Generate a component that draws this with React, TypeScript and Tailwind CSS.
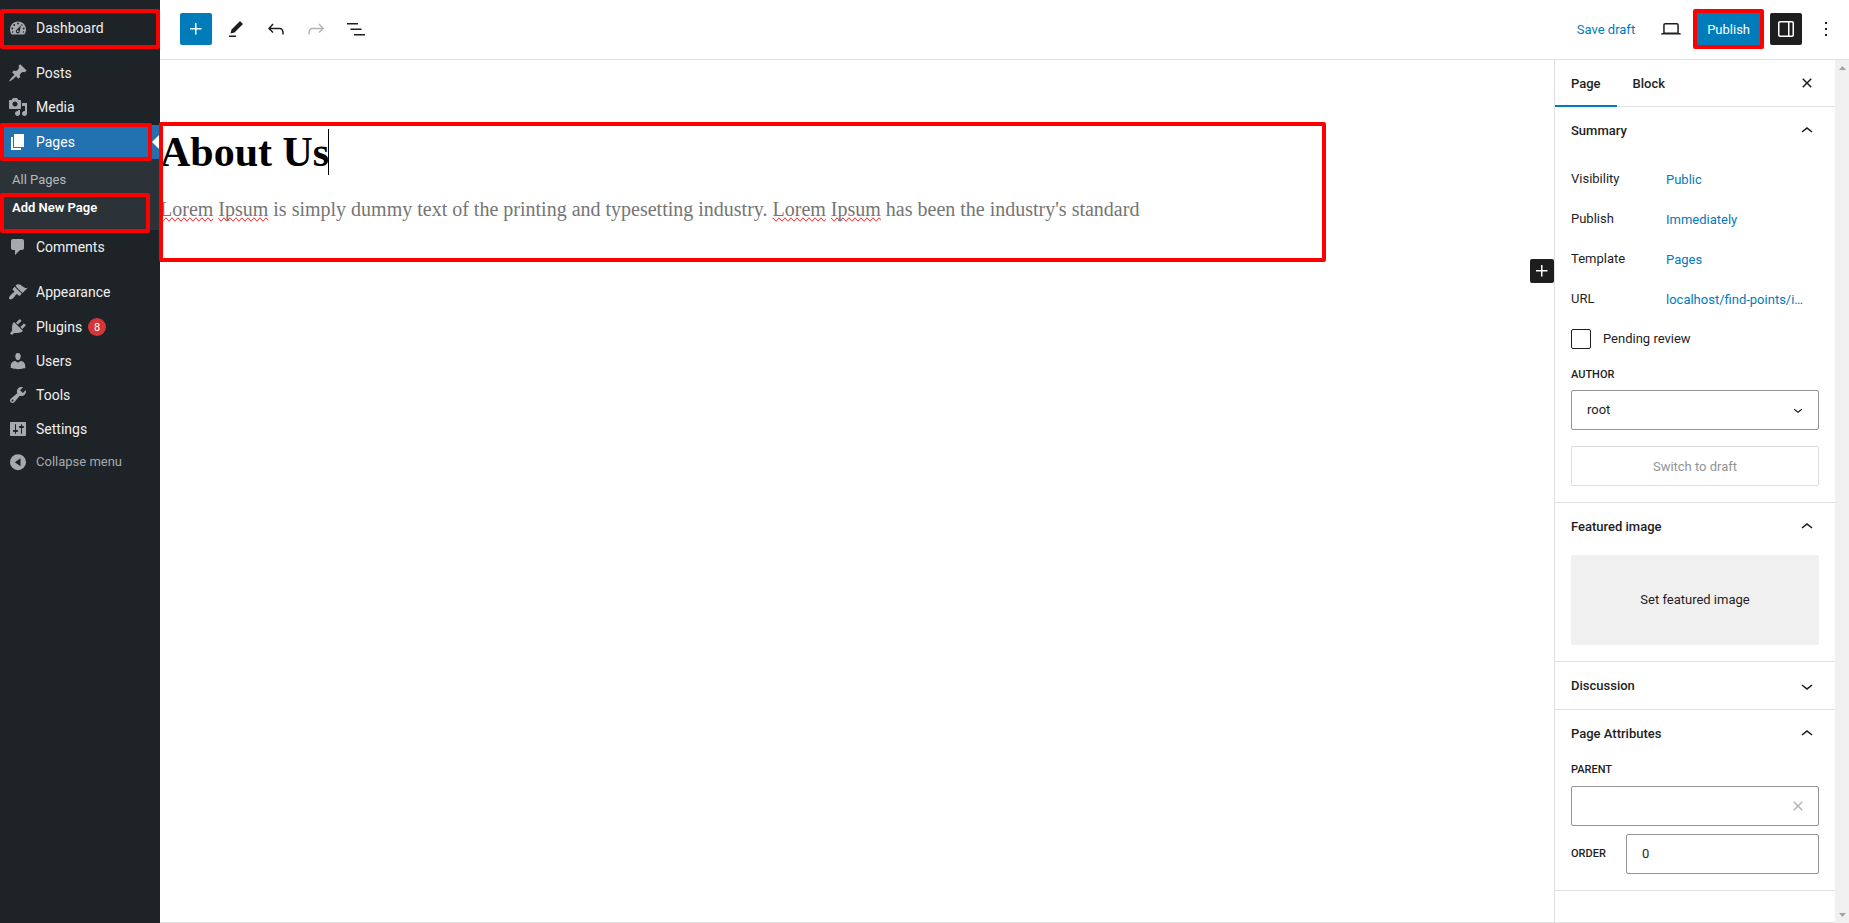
import React from 'react';

const icons = {
  post: 'M10.44 3.02l1.82-1.82 6.36 6.35-1.83 1.82c-1.05-.68-2.48-.57-3.41.36l-.75.75c-.92.93-1.04 2.35-.35 3.41l-1.83 1.82-2.41-2.41-2.8 2.79c-.42.42-3.38 2.71-3.8 2.29s1.86-3.39 2.28-3.81l2.79-2.79L4.1 9.36l1.83-1.82c1.05.69 2.48.57 3.4-.36l.75-.75c.93-.92 1.05-2.35.36-3.41z',
  media:
    'M13 11V4c0-.55-.45-1-1-1h-1.67L9 1H5L3.67 3H2c-.55 0-1 .45-1 1v7c0 .55.45 1 1 1h10c.55 0 1-.45 1-1zM7 4.5c1.38 0 2.5 1.12 2.5 2.5S8.38 9.5 7 9.5 4.5 8.38 4.5 7 5.62 4.5 7 4.5zM14 6h5v10.5c0 1.38-1.12 2.5-2.5 2.5S14 17.88 14 16.5s1.12-2.5 2.5-2.5c.17 0 .34.02.5.05V9h-3V6zm-4 8.05V13h2v3.5c0 1.38-1.12 2.5-2.5 2.5S7 17.88 7 16.5 8.12 14 9.5 14c.17 0 .34.02.5.05z',
  page: 'M6 15V2h10v13H6zm-1 1h8v2H3V5h2v11z',
  comments:
    'M5 2h9c1.1 0 2 .9 2 2v7c0 1.1-.9 2-2 2h-2l-5 5v-5H5c-1.1 0-2-.9-2-2V4c0-1.1.9-2 2-2z',
  appearance:
    'M14.48 11.06L7.41 3.99l1.5-1.5c.5-.56 2.3-.47 3.51.32 1.21.8 1.43 1.28 2.91 2.1 1.18.64 2.45 1.26 4.45.85zm-.71.71L6.7 4.7 4.93 6.47c-.39.39-.39 1.02 0 1.41l1.06 1.06c.39.39.39 1.03 0 1.42-.6.6-1.43 1.11-2.21 1.69-.35.26-.7.53-1.01.84C1.43 14.23.4 16.08 1.4 17.07c.99 1 2.84-.03 4.18-1.36.31-.31.58-.66.85-1.02.57-.78 1.08-1.61 1.69-2.21.39-.39 1.02-.39 1.41 0l1.06 1.06c.39.39 1.02.39 1.41 0z',
  plugins:
    'M13.11 4.36L9.87 7.6 8 5.73l3.24-3.24c.35-.34 1.05-.2 1.56.32.52.51.66 1.21.31 1.55zm-8 1.77l.91-1.12 9.01 9.01-1.19.84c-.71.71-2.63 1.16-3.82 1.16H6.14L4.9 17.26c-.59.59-1.54.59-2.12 0-.59-.58-.59-1.53 0-2.12l1.24-1.24v-3.88c0-1.13.4-3.19 1.09-3.89zm7.26 3.97l3.24-3.24c.34-.35 1.04-.21 1.55.31.52.51.66 1.21.31 1.55l-3.24 3.25z',
  users:
    'M10 9.25c-2.27 0-2.73-3.44-2.73-3.44C7 4.02 7.82 2 9.97 2c2.16 0 2.98 2.02 2.71 3.81 0 0-.41 3.44-2.68 3.44zm0 2.57L12.72 10c2.39 0 4.52 2.33 4.52 4.53v2.49s-3.65 1.13-7.24 1.13c-3.65 0-7.24-1.13-7.24-1.13v-2.49c0-2.25 1.94-4.48 4.47-4.48z',
  tools:
    'M16.68 9.77c-1.34 1.34-3.3 1.67-4.95.99l-5.41 6.52c-.99.99-2.59.99-3.58 0s-.99-2.59 0-3.57l6.52-5.42c-.68-1.65-.35-3.61.99-4.95 1.28-1.28 3.12-1.62 4.72-1.06l-2.89 2.89 2.82 2.82 2.86-2.87c.53 1.58.18 3.39-1.08 4.65zM3.81 16.21c.4.39 1.04.39 1.43 0 .4-.4.4-1.04 0-1.43-.39-.4-1.03-.4-1.43 0-.39.39-.39 1.03 0 1.43z',
  settings:
    'M18 16V4c0-.55-.45-1-1-1H3c-.55 0-1 .45-1 1v12c0 .55.45 1 1 1h14c.55 0 1-.45 1-1zM8 11h1c.55 0 1 .45 1 1s-.45 1-1 1H8v1.5c0 .28-.22.5-.5.5s-.5-.22-.5-.5V13H6c-.55 0-1-.45-1-1s.45-1 1-1h1V5.5c0-.28.22-.5.5-.5s.5.22.5.5V11zm5-2h-1c-.55 0-1-.45-1-1s.45-1 1-1h1V5.5c0-.28.22-.5.5-.5s.5.22.5.5V7h1c.55 0 1 .45 1 1s-.45 1-1 1h-1v5.5c0 .28-.22.5-.5.5s-.5-.22-.5-.5V9z',
  plus: 'M11 12.5V17.5H12.5V12.5H17.5V11H12.5V6H11V11H6V12.5H11Z',
  edit: 'm19 7-3-3-8.5 8.5-1 4 4-1L19 7Zm-7 11.5H5V20h7v-1.5Z',
  undo: 'M18.3 11.7c-.6-.6-1.4-.9-2.3-.9H6.7l2.9-3.3-1.1-1-4.5 5L8.5 16l1-1-2.7-2.7H16c.5 0 .9.2 1.3.5 1 1 1 3.4 1 4.5v.3h1.5v-.2c0-1.5 0-4.3-1.5-5.7z',
  redo: 'M15.6 6.5l-1.1 1 2.9 3.3H8c-.9 0-1.7.3-2.3.9-1.4 1.5-1.4 4.2-1.4 5.6v.2h1.5v-.3c0-1.1 0-3.5 1-4.5.3-.3.7-.5 1.3-.5h9.2L14.5 15l1.1 1.1 4.6-4.6-4.6-5z',
  list: 'M3 6h11v1.5H3V6Zm3.5 5.5h11V13h-11v-1.5ZM21 17H10v1.5h11V17Z',
  desktop:
    'M20.5 16h-.7V8c0-1.1-.9-2-2-2H6.2c-1.1 0-2 .9-2 2v8h-.7c-.8 0-1.5.7-1.5 1.5h20c0-.8-.7-1.5-1.5-1.5zM5.7 8c0-.3.2-.5.5-.5h11.6c.3 0 .5.2.5.5v7.6H5.7V8z',
  drawer:
    'M18 4H6c-1.1 0-2 .9-2 2v12c0 1.1.9 2 2 2h12c1.1 0 2-.9 2-2V6c0-1.1-.9-2-2-2zm-4 14.5H6c-.3 0-.5-.2-.5-.5V6c0-.3.2-.5.5-.5h8v13zm4.5-.5c0 .3-.2.5-.5.5h-2.5v-13H18c.3 0 .5.2.5.5v12z',
  more: 'M13 19h-2v-2h2v2zm0-6h-2v-2h2v2zm0-6h-2V5h2v2z',
  close:
    'M12 13.06l3.712 3.713 1.061-1.06L13.061 12l3.712-3.712-1.06-1.06L12 10.938 8.288 7.227l-1.061 1.06L10.939 12l-3.712 3.712 1.06 1.061L12 13.061z',
  up: 'M6.5 12.4L12 8l5.5 4.4-.9 1.2L12 10l-4.5 3.6-1-1.2z',
  down: 'M17.5 11.6L12 16l-5.5-4.4.9-1.2L12 14l4.5-3.6 1 1.2z',
};

type IconName = keyof typeof icons;

function MenuIcon({ name }: { name: IconName }) {
  return (
    <svg viewBox="0 0 20 20" className="size-5 shrink-0" fill="currentColor" fillRule="evenodd" aria-hidden="true">
      <path d={icons[name]} />
    </svg>
  );
}

function Icon({ name, className = 'size-6' }: { name: IconName; className?: string }) {
  return (
    <svg viewBox="0 0 24 24" className={className} fill="currentColor" aria-hidden="true">
      <path d={icons[name]} />
    </svg>
  );
}

function DashboardIcon() {
  return (
    <svg viewBox="0 0 20 20" className="size-5 shrink-0" aria-hidden="true">
      <path fill="currentColor" d="M3.76 16.5h12.48c1.11-1.37 1.76-3.11 1.76-5 0-4.42-3.58-8-8-8s-8 3.58-8 8c0 1.89.65 3.63 1.76 5z" />
      <g fill="#1d2327">
        <circle cx="10" cy="5.5" r=".9" />
        <circle cx="6.2" cy="7" r=".9" />
        <circle cx="13.9" cy="7" r=".7" />
        <circle cx="4.3" cy="10.5" r=".9" />
        <circle cx="4.6" cy="14" r=".8" />
        <circle cx="15.7" cy="10.5" r=".9" />
        <circle cx="15.400" cy="14" r=".8" />
        <path d="M12.900 7.300 11.800 13.600a2 2 0 1 1-2.900-2z" />
      </g>
      <circle cx="9.900" cy="13.300" r="1" fill="currentColor" />
    </svg>
  );
}

/** Red frame drawn over an element to point it out to the reader. */
function Highlight({ className }: { className: string }) {
  return <span aria-hidden="true" className={`pointer-events-none absolute z-10 rounded-xs border-4 border-[#ff0000] ${className}`} />;
}

function MenuItem({ label, icon, badge, highlight }: { label: string; icon?: IconName; badge?: number; highlight?: string }) {
  return (
    <li className="relative">
      <a href="#" className={`flex items-center gap-2 pl-2 text-sm text-[#f0f0f1] ${badge === undefined ? 'h-[34px]' : 'h-[35px] pt-px'}`}>
        <span className="text-[#a7aaad]">{icon ? <MenuIcon name={icon} /> : <DashboardIcon />}</span>
        {label}
        {badge !== undefined && (
          <span className="-ml-0.5 flex size-[18px] items-center justify-center rounded-full bg-[#d63638] text-[11px] leading-none text-white">
            {badge}
          </span>
        )}
      </a>
      {highlight && <Highlight className={highlight} />}
    </li>
  );
}

function Sidebar() {
  return (
    <nav aria-label="Main menu" className="w-40 shrink-0 bg-[#1d2327] pt-[11px]">
      <ul>
        <MenuItem label="Dashboard" highlight="-top-0.5 -bottom-1 left-0 right-0" />
      </ul>
      <ul className="mt-[11px]">
        <MenuItem label="Posts" icon="post" />
        <MenuItem label="Media" icon="media" />
        <li className="pt-px">
          <div className="relative">
            <a href="#" aria-current="true" className="flex h-[34px] items-center gap-2 bg-[#2271b1] pl-2 text-sm text-white">
              <MenuIcon name="page" />
              Pages
            </a>
            <span aria-hidden="true" className="absolute top-[9px] right-0 border-8 border-transparent border-r-white" />
            <Highlight className="-inset-y-0.5 right-2 left-0" />
          </div>
          <ul className="bg-[#2c3338] pt-[7px] pb-2 text-[13px]">
            <li>
              <a href="#" className="flex h-7 items-center pl-3 text-[#b4b9be]">All Pages</a>
            </li>
            <li className="relative">
              <a href="#" className="flex h-7 items-center pl-3 font-semibold text-white">Add New Page</a>
              <Highlight className="-top-px right-2.5 -bottom-[11px] left-0" />
            </li>
          </ul>
        </li>
        <MenuItem label="Comments" icon="comments" />
      </ul>
      <ul className="mt-[11px]">
        <MenuItem label="Appearance" icon="appearance" />
        <MenuItem label="Plugins" icon="plugins" badge={8} />
        <MenuItem label="Users" icon="users" />
        <MenuItem label="Tools" icon="tools" />
        <MenuItem label="Settings" icon="settings" />
      </ul>
      <button type="button" className="flex h-8 w-full items-center gap-2 pl-2 text-[13px] text-[#a7aaad]">
        <svg viewBox="0 0 20 20" className="size-5" fill="currentColor" fillRule="evenodd" aria-hidden="true">
          <path d="M10 2.200a8 8 0 1 0 0 16 8 8 0 0 0 0-16zM12.500 6.200v8L6.800 10.200z" />
        </svg>
        Collapse menu
      </button>
    </nav>
  );
}

function ToolButton({ name, label, className = 'text-[#1e1e1e]' }: { name: IconName; label: string; className?: string }) {
  return (
    <button type="button" aria-label={label} className={`flex size-8 items-center justify-center rounded-xs ${className}`}>
      <Icon name={name} />
    </button>
  );
}

function TopBar() {
  return (
    <header className="flex h-[60px] shrink-0 items-center justify-between border-b border-[#e0e0e0] pr-[7px] pb-px pl-5">
      <div className="flex gap-2">
        <ToolButton name="plus" label="Add block" className="bg-[#007cba] text-white" />
        <ToolButton name="edit" label="Tools" />
        <ToolButton name="undo" label="Undo" />
        <ToolButton name="redo" label="Redo" className="text-[#b5b5b5]" />
        <ToolButton name="list" label="Document overview" />
      </div>
      <div className="flex items-center gap-2 text-[13px]">
        <button type="button" className="h-8 px-3 pt-0.5 text-[#007cba]">Save draft</button>
        <ToolButton name="desktop" label="Preview" />
        <div className="relative mx-0.5">
          <button type="button" className="h-8 bg-[#007cba] px-2.5 pt-0.5 text-white">Publish</button>
          <Highlight className="-inset-1" />
        </div>
        <ToolButton name="drawer" label="Settings" className="bg-[#1e1e1e] text-white" />
        <ToolButton name="more" label="Options" />
      </div>
    </header>
  );
}

function Misspelt({ children }: { children: string }) {
  return <span className="[text-decoration-line:spelling-error]">{children}</span>;
}

function Canvas() {
  return (
    <main className="relative min-w-0 flex-1">
      <div className="relative mt-[62px] h-[140px] pt-[7px] font-['Liberation_Serif',serif]">
        <h1 className="flex text-[42px] leading-[46px] font-bold text-black">
          About Us
          <span aria-hidden="true" className="-ml-px w-px bg-black" />
        </h1>
        <p className="mt-5 text-xl leading-7 text-[#757575]">
          <Misspelt>Lorem</Misspelt> <Misspelt>Ipsum</Misspelt> is simply dummy text of the printing and typesetting industry.{' '}
          <Misspelt>Lorem</Misspelt> <Misspelt>Ipsum</Misspelt> has been the industry's standard
        </p>
        <Highlight className="inset-y-0 -left-px w-[1167px]" />
      </div>
      <button
        type="button"
        aria-label="Add block"
        className="absolute top-[199px] right-0 flex size-6 items-center justify-center rounded-xs bg-[#1e1e1e] text-white"
      >
        <Icon name="plus" />
      </button>
    </main>
  );
}

function Section({ title, open = true, children }: { title: string; open?: boolean; children?: React.ReactNode }) {
  return (
    <section className="border-b border-[#e0e0e0]">
      <h2>
        <button type="button" aria-expanded={open} className="flex h-[47px] w-full items-center justify-between px-4 font-medium">
          {title}
          <Icon name={open ? 'up' : 'down'} />
        </button>
      </h2>
      {open && <div className="px-4 pt-[5px] pb-4">{children}</div>}
    </section>
  );
}

const summary = [
  ['Visibility', 'Public'],
  ['Publish', 'Immediately'],
  ['Template', 'Pages'],
  ['URL', 'localhost/find-points/i…'],
];

function SettingsPanel() {
  return (
    <aside aria-label="Settings" className="w-[281px] shrink-0 border-l border-[#e0e0e0] text-[13px] text-[#1e1e1e]">
      <div className="flex h-[47px] items-stretch border-b border-[#e0e0e0]">
        <button type="button" className="-mb-px border-b-2 border-[#007cba] px-4 pt-0.5 font-medium">Page</button>
        <button type="button" className="px-4 pt-0.5 font-medium">Block</button>
        <button type="button" aria-label="Close settings" className="mr-4 ml-auto">
          <Icon name="close" />
        </button>
      </div>

      <Section title="Summary">
        <dl>
          {summary.map(([term, value]) => (
            <div key={term} className="flex h-10 items-center">
              <dt className="w-[95px] shrink-0">{term}</dt>
              <dd className="pt-0.5">
                <button type="button" className="whitespace-nowrap text-[#007cba]">{value}</button>
              </dd>
            </div>
          ))}
        </dl>
        <label className="mt-2.5 flex items-center gap-3">
          <input type="checkbox" className="size-5 appearance-none rounded-xs border border-[#1e1e1e] bg-white" />
          Pending review
        </label>
        <label htmlFor="author" className="mt-[18px] mb-[7px] block text-[11px] leading-4 font-medium uppercase">Author</label>
        <div className="relative">
          <select id="author" className="block h-10 w-full appearance-none rounded-xs border border-[#949494] bg-white px-[15px]">
            <option>root</option>
          </select>
          <Icon name="down" className="pointer-events-none absolute top-[11px] right-3 size-[18px]" />
        </div>
        <button type="button" disabled className="mt-4 h-10 w-full rounded-xs border border-[#dddddd] pt-0.5 text-[#949494]">
          Switch to draft
        </button>
      </Section>

      <Section title="Featured image">
        <button type="button" className="h-[90px] w-full rounded-xs bg-[#f0f0f0]">Set featured image</button>
      </Section>

      <Section title="Discussion" open={false} />

      <Section title="Page Attributes">
        <label htmlFor="parent" className="mb-2 block text-[11px] leading-4 font-medium uppercase">Parent</label>
        <div className="relative">
          <input id="parent" type="text" className="block h-10 w-full rounded-xs border border-[#949494] pr-10 pl-[15px]" />
          <button type="button" aria-label="Clear parent" className="absolute top-2 right-[9px] text-[#b5b5b5]">
            <Icon name="close" className="block size-6" />
          </button>
        </div>
        <div className="mt-2 flex items-center">
          <label htmlFor="order" className="w-[55px] text-[11px] leading-4 font-medium uppercase">Order</label>
          <input id="order" type="text" defaultValue="0" className="h-10 min-w-0 flex-1 rounded-xs border border-[#949494] px-[15px] pb-0.5" />
        </div>
      </Section>
    </aside>
  );
}

function ScrollRail() {
  return (
    <div aria-hidden="true" className="flex w-3.5 shrink-0 flex-col items-center justify-between bg-[#f0f0f0] py-1.5 text-[#a3a3a3]">
      <svg viewBox="0 0 7 4" className="h-1 w-[7px]" fill="currentColor"><path d="M0 4 3.500 0 7 4z" /></svg>
      <svg viewBox="0 0 7 4" className="h-1 w-[7px]" fill="currentColor"><path d="M0 0 3.500 4 7 0z" /></svg>
    </div>
  );
}

export default function App() {
  return (
    <div className="flex min-h-screen bg-white font-[Roboto,sans-serif]">
      <Sidebar />
      <div className="flex min-w-0 flex-1 flex-col">
        <TopBar />
        <div className="flex flex-1">
          <div className="flex min-w-0 flex-1 border-b border-[#e0e0e0]">
            <Canvas />
            <SettingsPanel />
          </div>
          <ScrollRail />
        </div>
      </div>
    </div>
  );
}
